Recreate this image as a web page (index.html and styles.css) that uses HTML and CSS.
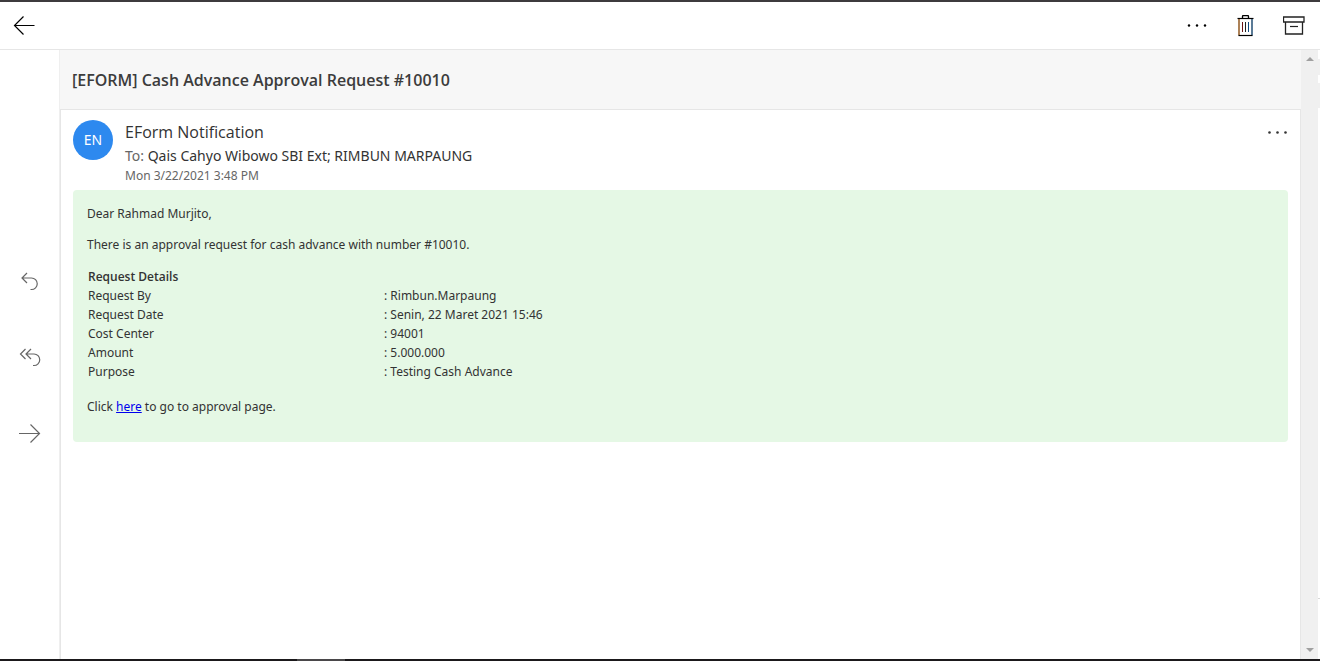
FILE: index.html
```html
<!DOCTYPE html>
<html lang="en">
<head>
<meta charset="utf-8">
<title>Cash Advance Approval Request</title>
<link rel="stylesheet" href="styles.css">
</head>
<body>
<div class="window">
  <header class="toolbar">
    <button class="icon-button" aria-label="Back">
      <svg width="22" height="20" viewBox="0 0 22 20"><path d="M10.500 .500 1.500 9.500l9 9M1.500 9.500h20" fill="none" stroke="#000" stroke-width="1.200"/></svg>
    </button>
    <div class="toolbar-actions">
      <button class="icon-button" aria-label="More actions">
        <svg width="22" height="22" viewBox="0 0 22 22"><circle cx="2" cy="10.500" r="1.200"/><circle cx="10" cy="10.500" r="1.200"/><circle cx="18" cy="10.500" r="1.200"/></svg>
      </button>
      <button class="icon-button" aria-label="Delete">
        <svg width="18" height="22" viewBox="0 0 18 22" fill="none" stroke="#000"><path d="M5.500 3V1.500Q5.500 .500 6.500 .500h4q1 0 1 1V3" stroke-width="1.300"/><path d="M.500 3.500h16" stroke-width="1.200"/><path d="M2 4v16.500" stroke="#8a4d10" stroke-width="1.400"/><path d="M15 4v16.500" stroke="#15436b" stroke-width="1.400"/><path d="M1.500 20.500h14" stroke-width="1.200"/><path d="M5.500 7v10" stroke="#6b1414"/><path d="M8.500 7v10" stroke="#222"/><path d="M11.500 7v10" stroke="#124a80"/></svg>
      </button>
      <button class="icon-button" aria-label="Archive">
        <svg width="22" height="20" viewBox="0 0 22 20" fill="none" stroke="#222"><path d="M.500 1h20.500v5H.500zM2.500 6.500v11.500h17V6.500" stroke-width="1.300"/><path d="M7 10.500h8" stroke-width="1.200"/></svg>
      </button>
    </div>
  </header>
  <div class="main">
    <nav class="reply-rail" aria-label="Respond">
      <button class="icon-button" aria-label="Reply">
        <svg width="22" height="20" viewBox="0 0 22 20" fill="none" stroke="#666" stroke-width="1.200"><path d="M8 1 3 6l5 5M3 6h9.500a5.700 5.700 0 0 1 0 11.500h-1"/></svg>
      </button>
      <button class="icon-button" aria-label="Reply all">
        <svg width="22" height="20" viewBox="0 0 22 20" fill="none" stroke="#666" stroke-width="1.200"><path d="M6.500 1 1.500 6l5 5M12 1 7 6l5 5M7 6h8a5.700 5.700 0 0 1 0 11.500h-1"/></svg>
      </button>
      <button class="icon-button" aria-label="Forward">
        <svg width="22" height="20" viewBox="0 0 22 20" fill="none" stroke="#666" stroke-width="1.200"><path d="M0 9.500h20.500M11.500 .500l9 9-9 9"/></svg>
      </button>
    </nav>
    <main class="reader">
      <h1 class="subject">[EFORM] Cash Advance Approval Request #10010</h1>
      <article class="message">
        <div class="message-head">
          <div class="avatar">EN</div>
          <div class="people">
            <div class="sender">EForm Notification</div>
            <div class="recipients"><span class="muted">To:</span> Qais Cahyo Wibowo SBI Ext; RIMBUN MARPAUNG</div>
            <div class="date">Mon 3/22/2021 3:48 PM</div>
          </div>
          <button class="icon-button message-more" aria-label="More message actions">
            <svg width="20" height="8" viewBox="0 0 20 8" fill="#333"><circle cx="1.500" cy="4.500" r="1.300"/><circle cx="9.500" cy="4.500" r="1.300"/><circle cx="17.500" cy="4.500" r="1.300"/></svg>
          </button>
        </div>
        <div class="body">
          <p>Dear Rahmad Murjito,</p>
          <p>There is an approval request for cash advance with number #10010.</p>
          <table class="details">
            <tbody>
              <tr><th colspan="2">Request Details</th></tr>
              <tr><td>Request By</td><td>: Rimbun.Marpaung</td></tr>
              <tr><td>Request Date</td><td>: Senin, 22 Maret 2021 15:46</td></tr>
              <tr><td>Cost Center</td><td>: 94001</td></tr>
              <tr><td>Amount</td><td>: 5.000.000</td></tr>
              <tr><td>Purpose</td><td>: Testing Cash Advance</td></tr>
            </tbody>
          </table>
          <p>Click <a href="#">here</a> to go to approval page.</p>
        </div>
      </article>
    </main>
    <div class="scrollbar" aria-hidden="true">
      <svg width="8" height="4" viewBox="0 0 8 4"><path d="M4 0 8 4H0z" fill="#a0a0a0"/></svg>
      <svg width="8" height="4" viewBox="0 0 8 4"><path d="M0 0h8L4 4z" fill="#a0a0a0"/></svg>
    </div>
    <div class="backdrop" aria-hidden="true"><i class="sliver sliver-top"></i><i class="sliver sliver-mid"></i><i class="line"></i></div>
  </div>
  <div class="taskbar" aria-hidden="true"><div class="taskbar-active"></div></div>
</div>
</body>
</html>
```
FILE: styles.css
```css
* { box-sizing: border-box; }
body {
  margin: 0;
  background: #fff;
  color: #333;
  font-family: "Noto Sans", "Open Sans", sans-serif;
  font-size: 12px;
}
.window {
  display: flex;
  flex-direction: column;
  height: 100vh;
  padding: 0 10px 7px 0;
}
.icon-button {
  display: flex;
  padding: 0;
  border: 0;
  background: none;
}
.toolbar {
  display: flex;
  justify-content: space-between;
  align-items: center;
  height: 50px;
  padding: 0 15px 0 13px;
  border-top: 2px solid #3e3b3e;
  border-bottom: 1px solid #e6e6e6;
}
.toolbar-actions {
  display: flex;
  align-items: center;
  gap: 28px;
}
.main {
  flex: 1;
  display: flex;
  min-height: 0;
}
.reply-rail {
  display: flex;
  flex-direction: column;
  justify-content: center;
  align-items: center;
  gap: 56px;
  width: 59px;
  padding-top: 6px;
}
.reader {
  flex: 1;
  display: flex;
  flex-direction: column;
  background: #f7f7f7;
  border-left: 1px solid #efefef;
}
.subject {
  margin: 0;
  padding: 18px 12px 17px;
  font-family: "Open Sans", "Noto Sans", sans-serif;
  font-size: 16px;
  line-height: 24px;
  font-weight: 600;
  color: #3c3c3c;
}
.message {
  flex: 1;
  padding: 10px 12px;
  background: #fff;
  border: 1px solid #e6e6e6;
  border-bottom: 0;
}
.message-head {
  display: flex;
  align-items: flex-start;
  gap: 12px;
}
.avatar {
  width: 40px;
  height: 40px;
  border-radius: 50%;
  background: #2d89ef;
  color: #fff;
  font-size: 14px;
  line-height: 40px;
  text-align: center;
}
.people { flex: 1; }
.sender {
  font-family: "Open Sans", "Noto Sans", sans-serif;
  font-size: 16px;
  line-height: 24px;
}
.recipients {
  font-size: 14px;
  line-height: 23px;
}
.muted, .date { color: #666; }
.date {
  line-height: 17px;
}
.message-more { padding-top: 8px; }
.body {
  margin-top: 6px;
  padding: 14px 14px 26px;
  border-radius: 4px;
  background: #e5f8e5;
}
.body p {
  margin: 0;
  line-height: 19px;
}
.body p + p { margin-top: 12px; }
.details {
  width: 592px;
  margin: 13px 0 16px;
  border-collapse: collapse;
  table-layout: fixed;
}
.details th, .details td {
  padding: 0 1px;
  line-height: 19px;
  text-align: left;
}
.details th { 
  font-family: "Open Sans", "Noto Sans", sans-serif;
  font-weight: 600;
}
.body a { color: #0000ee; }
.scrollbar {
  display: flex;
  flex-direction: column;
  justify-content: space-between;
  align-items: center;
  width: 17px;
  padding: 7px 0;
  background: #f0f0f0;
}
.backdrop {
  display: flex;
  flex-direction: column;
  width: 2px;
}
.sliver { background: #f0f0f0; }
.sliver-top {
  height: 16px;
  margin-top: 9px;
}
.sliver-mid {
  height: 25px;
  margin-top: 8px;
}
.line {
  height: 1px;
  margin-top: auto;
  margin-bottom: 60px;
  background: #d8d8d8;
}
.taskbar {
  height: 2px;
  padding-left: 297px;
  background: #1b191b;
}
.taskbar-active {
  width: 48px;
  height: 2px;
  background: #4a484a;
}
```
